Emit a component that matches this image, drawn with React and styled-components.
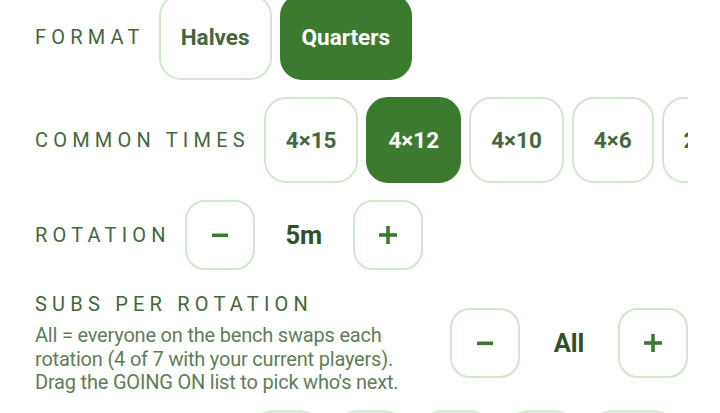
import React, { useState } from 'react'
import styled, { createGlobalStyle } from 'styled-components'

const GlobalStyle = createGlobalStyle`
  html, body {
    margin: 0;
    padding: 0;
    background: #ffffff;
    overflow: hidden;
  }
  body {
    font-family: Roboto, "Noto Sans", sans-serif;
    -webkit-font-smoothing: antialiased;
  }
`

const colors = {
  green: '#3b7a2f',
  ink: '#45673f',
  text: '#2f4f2b',
  soft: '#5f7d5a',
  line: '#d3e6cf',
  chip: '#dcecd8'
}

const Settings = styled.div`
  margin: -6px 32px 0 35px;
  display: flex;
  flex-direction: column;
  gap: 17px;
`

const Row = styled.div`
  display: flex;
  align-items: center;
  gap: 14px;
  min-width: 0;
`

const Label = styled.div`
  flex: none;
  font-size: 20px;
  letter-spacing: 5.2px;
  text-transform: uppercase;
  color: ${colors.ink};
  white-space: nowrap;
`

const Options = styled.div`
  display: flex;
  gap: 8px;
  overflow: hidden;
  min-width: 0;
  flex: 1;
`

const Choice = styled.button`
  flex: none;
  height: 86px;
  padding: 0 20px;
  border-radius: 22px;
  border: 2px solid ${p => p.$active ? colors.green : colors.line};
  background: ${p => p.$active ? colors.green : '#ffffff'};
  color: ${p => p.$active ? '#ffffff' : colors.ink};
  font-family: Roboto, sans-serif;
  font-weight: 700;
  font-size: 22.5px;
  cursor: pointer;
`

const Stepper = styled.div`
  display: flex;
  align-items: center;
  flex: none;
`

const StepButton = styled.button`
  width: 70px;
  height: 70px;
  border-radius: 20px;
  border: 2px solid ${colors.line};
  background: #ffffff;
  color: ${colors.green};
  display: flex;
  align-items: center;
  justify-content: center;
  padding: 0;
  cursor: pointer;
`

const StepValue = styled.div`
  width: 98px;
  text-align: center;
  font-weight: 700;
  font-size: 25.5px;
  color: ${colors.text};
`

const SubsRow = styled.div`
  display: flex;
  align-items: center;
  justify-content: space-between;
  margin-top: 5px;
`

const SubsText = styled.div`
  display: flex;
  flex-direction: column;
  gap: 8px;
`

const Hint = styled.p`
  margin: 0;
  font-size: 20px;
  line-height: 23.5px;
  letter-spacing: -0.2px;
  color: ${colors.soft};
`

const Chips = styled.div`
  display: flex;
  gap: 13px;
  margin-left: 215px;
  margin-top: -2px;
`

const Chip = styled.div`
  width: ${p => p.$wide ? 86 : 72}px;
  height: 60px;
  border-radius: 22px;
  background: ${colors.chip};
  flex: none;
`

const Minus = () => (
  <svg width="18" height="18" viewBox="0 0 18 18">
    <rect x="1" y="7.5" width="16" height="3.6" fill="currentColor" />
  </svg>
)

const Plus = () => (
  <svg width="20" height="20" viewBox="0 0 20 20">
    <rect x="1" y="8.2" width="18" height="3.6" fill="currentColor" />
    <rect x="8.2" y="1" width="3.6" height="18" fill="currentColor" />
  </svg>
)

const Counter = ({ value, onDown, onUp }) => (
  <Stepper>
    <StepButton onClick={onDown} aria-label="decrease"><Minus /></StepButton>
    <StepValue>{value}</StepValue>
    <StepButton onClick={onUp} aria-label="increase"><Plus /></StepButton>
  </Stepper>
)

const times = ['4×15', '4×12', '4×10', '4×6', '2×20']

export default function App() {
  const [format, setFormat] = useState('Quarters')
  const [time, setTime] = useState('4×12')
  const [rotation, setRotation] = useState(5)

  return (
    <>
      <GlobalStyle />
      <Settings>
        <Row>
          <Label>Format</Label>
          <Options>
            {['Halves', 'Quarters'].map(f => (
              <Choice key={f} $active={format === f} onClick={() => setFormat(f)}>{f}</Choice>
            ))}
          </Options>
        </Row>
        <Row>
          <Label>Common times</Label>
          <Options>
            {times.map(t => (
              <Choice key={t} $active={time === t} onClick={() => setTime(t)}>{t}</Choice>
            ))}
          </Options>
        </Row>
        <Row>
          <Label>Rotation</Label>
          <Counter
            value={`${rotation}m`}
            onDown={() => setRotation(r => Math.max(1, r - 1))}
            onUp={() => setRotation(r => r + 1)}
          />
        </Row>
        <SubsRow>
          <SubsText>
            <Label>Subs per rotation</Label>
            <Hint>
              All = everyone on the bench swaps each<br />
              rotation (4 of 7 with your current players).<br />
              Drag the GOING ON list to pick who's next.
            </Hint>
          </SubsText>
          <Counter value="All" />
        </SubsRow>
        <Chips>
          {[0, 1, 2, 3, 4].map(i => <Chip key={i} $wide={i === 4} />)}
        </Chips>
      </Settings>
    </>
  )
}
